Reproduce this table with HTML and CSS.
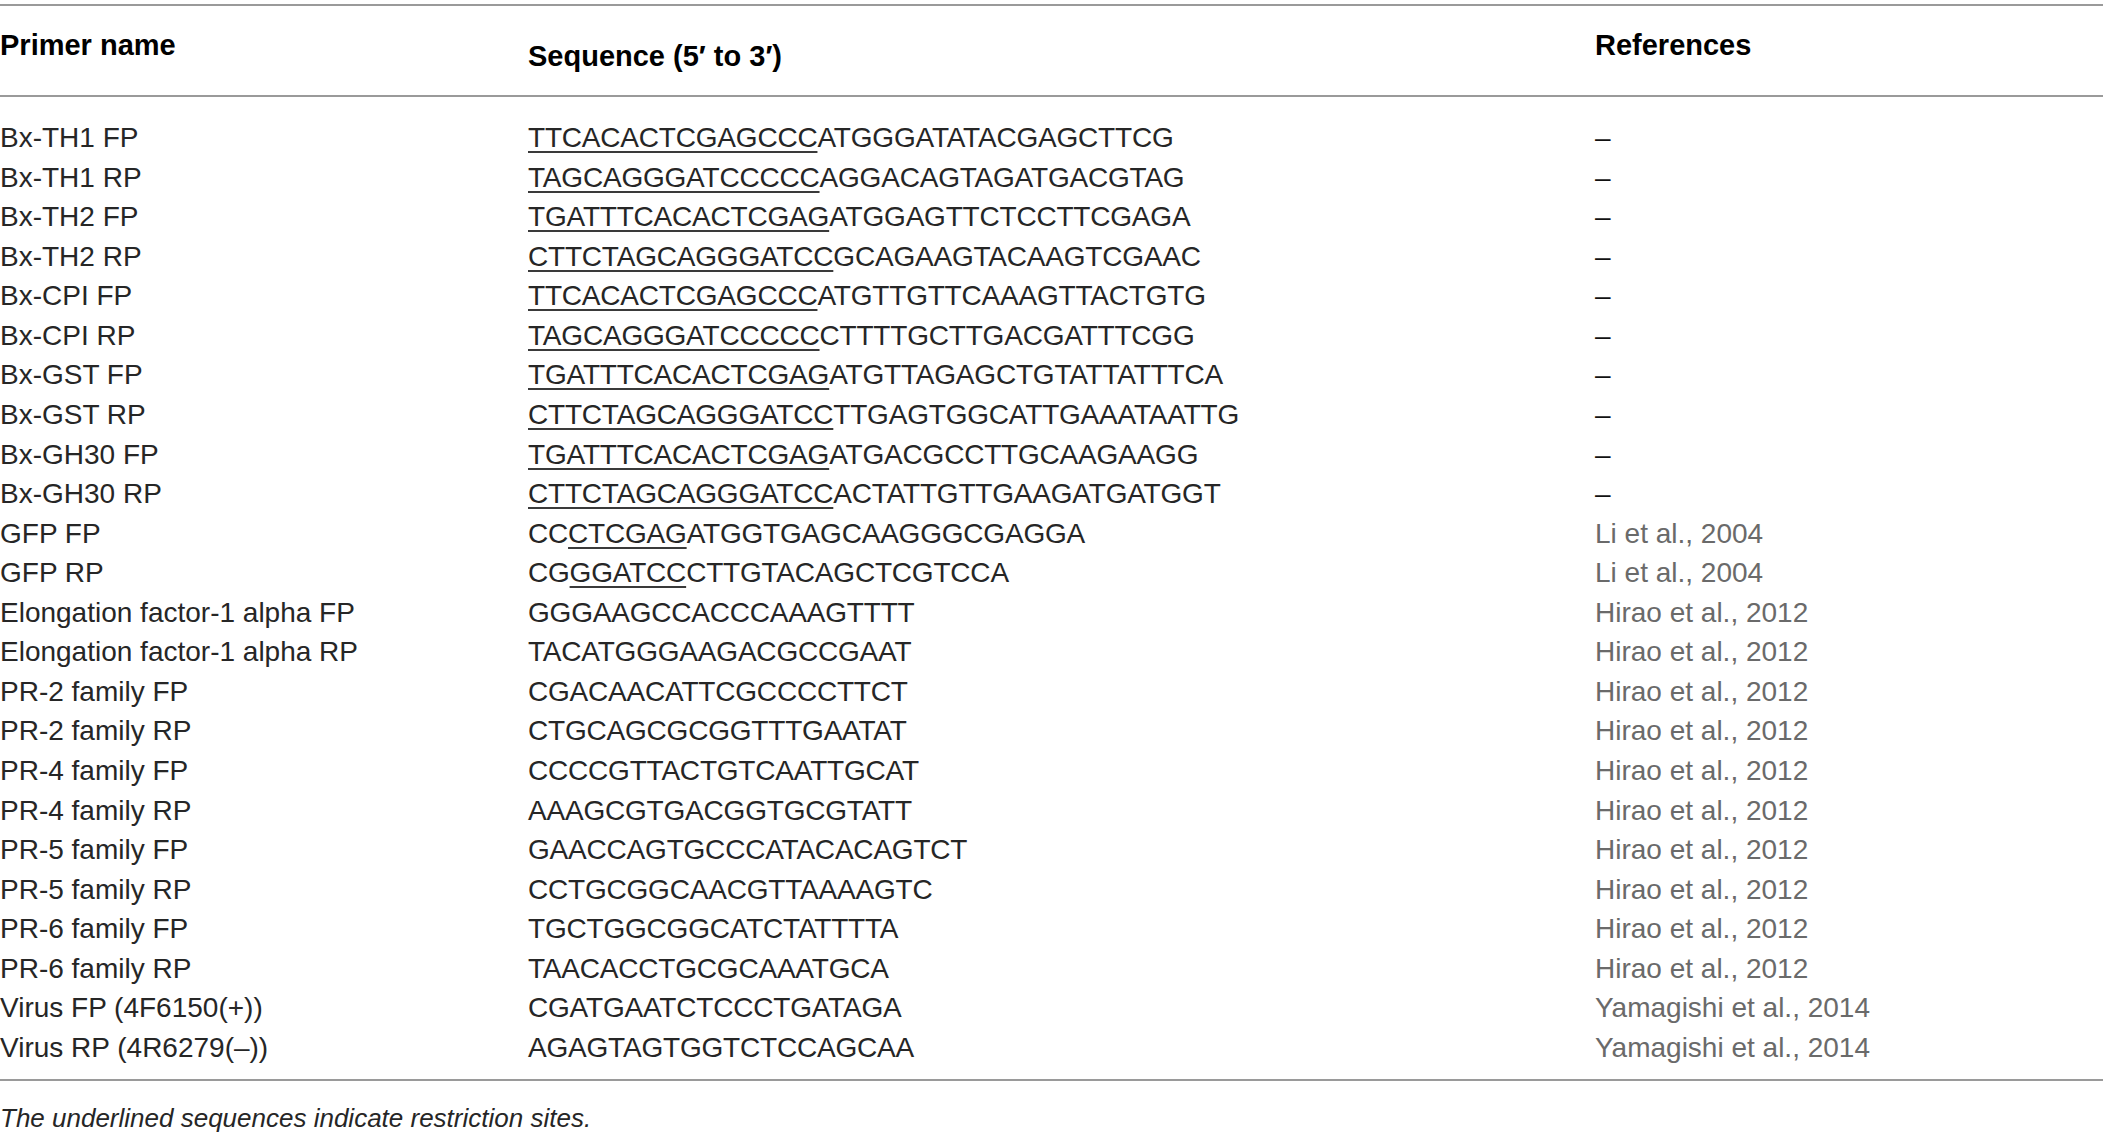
FILE: index.html
```html
<!DOCTYPE html>
<html lang="en">
<head>
<meta charset="utf-8">
<title>Primers</title>
<link rel="stylesheet" href="styles.css">
</head>
<body>
<div class="table">
  <div class="head">
    <div class="th">Primer name</div>
    <div class="th th-seq">Sequence (5′ to 3′)</div>
    <div class="th">References</div>
  </div>
  <div class="tbody">
    <div class="row"><div>Bx-TH1 FP</div><div class="seq"><u>TTCACACTCGAGCCC</u>ATGGGATATACGAGCTTCG</div><div class="dash">–</div></div>
    <div class="row"><div>Bx-TH1 RP</div><div class="seq"><u>TAGCAGGGATCCCCC</u>AGGACAGTAGATGACGTAG</div><div class="dash">–</div></div>
    <div class="row"><div>Bx-TH2 FP</div><div class="seq"><u>TGATTTCACACTCGAG</u>ATGGAGTTCTCCTTCGAGA</div><div class="dash">–</div></div>
    <div class="row"><div>Bx-TH2 RP</div><div class="seq"><u>CTTCTAGCAGGGATCC</u>GCAGAAGTACAAGTCGAAC</div><div class="dash">–</div></div>
    <div class="row"><div>Bx-CPI FP</div><div class="seq"><u>TTCACACTCGAGCCC</u>ATGTTGTTCAAAGTTACTGTG</div><div class="dash">–</div></div>
    <div class="row"><div>Bx-CPI RP</div><div class="seq"><u>TAGCAGGGATCCCCC</u>CTTTTGCTTGACGATTTCGG</div><div class="dash">–</div></div>
    <div class="row"><div>Bx-GST FP</div><div class="seq"><u>TGATTTCACACTCGAG</u>ATGTTAGAGCTGTATTATTTCA</div><div class="dash">–</div></div>
    <div class="row"><div>Bx-GST RP</div><div class="seq"><u>CTTCTAGCAGGGATCC</u>TTGAGTGGCATTGAAATAATTG</div><div class="dash">–</div></div>
    <div class="row"><div>Bx-GH30 FP</div><div class="seq"><u>TGATTTCACACTCGAG</u>ATGACGCCTTGCAAGAAGG</div><div class="dash">–</div></div>
    <div class="row"><div>Bx-GH30 RP</div><div class="seq"><u>CTTCTAGCAGGGATCC</u>ACTATTGTTGAAGATGATGGT</div><div class="dash">–</div></div>
    <div class="row"><div>GFP FP</div><div class="seq">CC<u>CTCGAG</u>ATGGTGAGCAAGGGCGAGGA</div><div class="ref">Li et al., 2004</div></div>
    <div class="row"><div>GFP RP</div><div class="seq">CG<u>GGATCC</u>CTTGTACAGCTCGTCCA</div><div class="ref">Li et al., 2004</div></div>
    <div class="row"><div>Elongation factor-1 alpha FP</div><div class="seq">GGGAAGCCACCCAAAGTTTT</div><div class="ref">Hirao et al., 2012</div></div>
    <div class="row"><div>Elongation factor-1 alpha RP</div><div class="seq">TACATGGGAAGACGCCGAAT</div><div class="ref">Hirao et al., 2012</div></div>
    <div class="row"><div>PR-2 family FP</div><div class="seq">CGACAACATTCGCCCCTTCT</div><div class="ref">Hirao et al., 2012</div></div>
    <div class="row"><div>PR-2 family RP</div><div class="seq">CTGCAGCGCGGTTTGAATAT</div><div class="ref">Hirao et al., 2012</div></div>
    <div class="row"><div>PR-4 family FP</div><div class="seq">CCCCGTTACTGTCAATTGCAT</div><div class="ref">Hirao et al., 2012</div></div>
    <div class="row"><div>PR-4 family RP</div><div class="seq">AAAGCGTGACGGTGCGTATT</div><div class="ref">Hirao et al., 2012</div></div>
    <div class="row"><div>PR-5 family FP</div><div class="seq">GAACCAGTGCCCATACACAGTCT</div><div class="ref">Hirao et al., 2012</div></div>
    <div class="row"><div>PR-5 family RP</div><div class="seq">CCTGCGGCAACGTTAAAAGTC</div><div class="ref">Hirao et al., 2012</div></div>
    <div class="row"><div>PR-6 family FP</div><div class="seq">TGCTGGCGGCATCTATTTTA</div><div class="ref">Hirao et al., 2012</div></div>
    <div class="row"><div>PR-6 family RP</div><div class="seq">TAACACCTGCGCAAATGCA</div><div class="ref">Hirao et al., 2012</div></div>
    <div class="row"><div>Virus FP (4F6150(+))</div><div class="seq">CGATGAATCTCCCTGATAGA</div><div class="ref">Yamagishi et al., 2014</div></div>
    <div class="row"><div>Virus RP (4R6279(–))</div><div class="seq">AGAGTAGTGGTCTCCAGCAA</div><div class="ref">Yamagishi et al., 2014</div></div>
  </div>
</div>
<p class="note">The underlined sequences indicate restriction sites.</p>
</body>
</html>
```
FILE: styles.css
```css
html, body {
  margin: 0;
  padding: 0;
  background: #ffffff;
}
body {
  font-family: "Liberation Sans", Arial, sans-serif;
  color: #262626;
  width: 2103px;
}
.table {
  margin-top: 4px;
  border-top: 2px solid #9a9a9a;
  border-bottom: 2px solid #9a9a9a;
}
.head {
  display: grid;
  grid-template-columns: 528px 1067px 1fr;
  height: 89px;
  border-bottom: 2px solid #9a9a9a;
  box-sizing: content-box;
}
.th {
  font-weight: bold;
  font-size: 29px;
  line-height: 36px;
  padding-top: 21px;
  color: #000;
}
.th-seq {
  padding-top: 32px;
}
.tbody {
  padding: 21px 0 11px;
}
.row {
  display: grid;
  grid-template-columns: 528px 1067px 1fr;
  height: 39.57px;
  font-size: 28px;
  line-height: 39.57px;
  white-space: nowrap;
}
.seq {
  letter-spacing: -0.2px;
}
.seq u {
  text-decoration: underline;
  text-decoration-thickness: 2px;
  text-underline-offset: 4px;
  text-decoration-color: #3a3a3a;
}
.dash {
  color: #111;
}
.ref {
  color: #6a6a6a;
}
.note {
  margin: 22px 0 0;
  font-size: 26px;
  line-height: 30px;
  font-style: italic;
  color: #262626;
}
```
